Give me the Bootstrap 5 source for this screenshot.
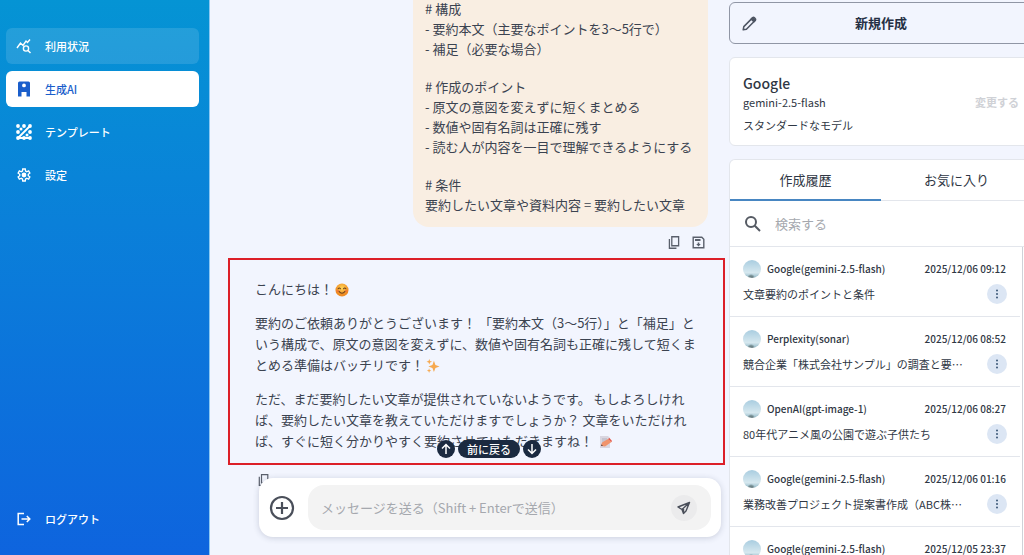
<!DOCTYPE html>
<html lang="ja">
<head>
<meta charset="utf-8">
<meta name="viewport" content="width=device-width, initial-scale=1">
<title>生成AI</title>
<link rel="stylesheet" href="https://cdn.jsdelivr.net/npm/bootstrap@5.3.0/dist/css/bootstrap.min.css">
<style>
  body { font-family: "Noto Sans CJK JP", sans-serif; font-size: 13px; color: #3b4350; background: #f2f5fe; }
  svg { display: block; flex: none; }
  .app-shell { display: grid; grid-template-columns: 210px minmax(0, 1fr) 295px; height: 100vh; }
  .fs-11 { font-size: 11px; line-height: 16px; }
  .fs-10 { font-size: 10px; line-height: 16px; }
  .fs-13 { font-size: 13px; }

  /* sidebar */
  .side-menu { background: linear-gradient(#0594d4, #0a80d9 40%, #0e64de); padding: 28px 10px 18px 6px; border-right: 1px solid #8cc8f2; }
  .side-menu .nav { gap: 7px; }
  .side-menu .nav-link { display: flex; align-items: center; gap: 13px; height: 36px; padding: 0 10px; border-radius: 6px; color: #fff; font-size: 11px; font-weight: 500; }
  .side-menu .nav-link.hovered { background: rgba(255,255,255,.12); }
  .side-menu .nav-link.active { background: #fff; color: #1a5ecb; }

  /* conversation */
  .chat-log { padding: 0 4px 69px 18px; }
  .prompt-bubble { background: #f9eee2; border-radius: 0 0 16px 16px; padding: 32px 12px 12px; width: 295px; margin-right: 17px; line-height: 20px; gap: 18px; }
  .prompt-bubble p { margin: 0; }
  .bubble-tools { gap: 11px; padding: 9px 20px 9px 0; color: #5a606c; }
  .reply-box { border: 2px solid #dc1f28; padding: 18px 18px 12px 25px; line-height: 21px; }
  .reply-box p { margin: 0 0 13px; }
  .reply-box p:last-child { margin: 0; }
  .reply-box svg { display: inline-block; vertical-align: -3px; margin-left: 2px; }
  .reply-tools { padding: 9px 0 0 29px; color: #5a606c; }
  .tool-btn { border: 0; background: none; padding: 0; color: inherit; display: flex; }
  .jump-bar { bottom: 97px; left: 227px; gap: 3px; }
  .jump-bar button { border: 0; background: #1b2a40; color: #fff; height: 18px; min-width: 18px; border-radius: 9px; padding: 0; display: flex; align-items: center; justify-content: center; font-size: 11px; font-weight: 500; }
  .jump-bar .jump-label { padding: 0 9px; }
  .composer { left: 49px; right: 8px; bottom: 18px; height: 59px; background: #fff; border-radius: 14px; box-shadow: 0 1px 6px rgba(40,50,80,.2); padding: 0 10px; gap: 13px; color: #4a4f5a; }
  .composer-field { background: #f3f3f3; border-radius: 16px; height: 45px; padding: 0 14px 0 13px; }
  .composer-field input, .search-row input { border: 0; outline: 0; background: none; min-width: 0; padding: 0; color: inherit; }
  .composer-field input::placeholder, .search-row input::placeholder { color: #a5a8ae; opacity: 1; }
  .send-btn { width: 26px; height: 26px; border: 0; border-radius: 50%; background: #ebebec; color: #4a4f5a; padding: 0; }

  /* right panel, slightly wider than its track */
  .right-rail { margin-right: -9px; padding-top: 2px; gap: 13px; color: #2f3744; }
  .new-btn { border: 1px solid #9096a5; border-radius: 6px; background: transparent; height: 42px; padding: 0 10px; font-weight: 700; color: #253044; }
  .new-btn svg { left: 12px; top: 13px; }
  .panel { background: #fff; border: 1px solid #e3e6ec; border-radius: 6px; }
  .model-panel { padding: 15px 13px 12px; }
  .model-title { font-size: 14px; line-height: 21px; font-weight: 500; }
  .model-note { margin-top: 7px; }
  .change-btn { border: 0; background: none; padding: 0; color: #cfd1d6; font-weight: 700; }
  .history-panel { border-bottom: 0; border-radius: 6px 6px 0 0; }
  .history-tabs button { border: 0; border-bottom: 1px solid #e3e6ec; background: none; height: 41px; padding: 0; color: inherit; }
  .history-tabs button.current { border-bottom: 2px solid #4786c2; }
  .search-row { height: 46px; padding: 0 14px; gap: 13px; border-bottom: 1px solid #e3e6ec; color: #555a63; }
  .history-list { margin-right: 9px; border-right: 1px solid #cfd2d8; padding-right: 2px; }
  .history-item { height: 70px; padding: 13px 13px 0; border-bottom: 1px solid #e3e6ec; }
  .history-item time { margin-right: 1px; }
  .avatar-dot { width: 18px; height: 18px; margin-right: 6px; border-radius: 50%; background: radial-gradient(circle at 45% 100%, #6f8589 0 2px, transparent 4px), linear-gradient(#a9cde0, #d6e8ef 70%, #8eb5c4); }
  .item-row { margin-top: 6px; }
  .more-btn { width: 20px; height: 20px; border: 0; border-radius: 50%; background: #dce6f4; color: #3c5878; padding: 0; display: flex; align-items: center; justify-content: center; }
</style>
</head>
<body class="overflow-hidden">
<svg width="0" height="0" class="position-absolute" aria-hidden="true">
  <symbol id="copy" viewBox="0 0 12 12"><path d="M3.500.7h6.300v8.300H3.500zM1.300 2.800v8.500h6.500" fill="none" stroke="currentColor" stroke-width="1.200"/></symbol>
  <symbol id="dots" viewBox="0 0 10 10"><g fill="currentColor"><circle cx="5" cy="1.500" r="1"/><circle cx="5" cy="5" r="1"/><circle cx="5" cy="8.500" r="1"/></g></symbol>
</svg>
<div class="app-shell overflow-hidden">

  <nav class="side-menu d-flex flex-column justify-content-between">
    <div class="nav flex-column">
      <a class="nav-link hovered" href="#"><svg width="16" height="16" viewBox="0 0 16 16" fill="none" stroke="currentColor" stroke-width="1.400"><path d="M1 10l3.500-5 2.500 2.500L10 3l1.500 1.500L14 1.500"/><circle cx="10" cy="10.500" r="2.600"/><path d="M12 12.500l2.500 2.500"/></svg>利用状況</a>
      <a class="nav-link active" href="#" aria-current="page"><svg width="16" height="16" viewBox="0 0 16 16"><path fill="currentColor" fill-rule="evenodd" d="M3.500.5h9A1.500 1.500 0 0 1 14 2v13.500h-3.500V11h-5v4.500H2V2A1.500 1.500 0 0 1 3.500.5zM8 2.500a1.900 1.900 0 1 0 0 3.800 1.900 1.900 0 1 0 0-3.800z"/></svg>生成AI</a>
      <a class="nav-link" href="#"><svg width="16" height="16" viewBox="0 0 16 16"><g fill="currentColor"><circle cx="2" cy="2" r="1.900"/><circle cx="8" cy="2" r="1.900"/><circle cx="14" cy="2" r="1.900"/><circle cx="2" cy="8" r="1.900"/><circle cx="14" cy="8" r="1.900"/><circle cx="2" cy="14" r="1.900"/><circle cx="8" cy="14" r="1.900"/><circle cx="14" cy="14" r="1.900"/><circle cx="5" cy="5" r="1.500"/><circle cx="11" cy="11" r="1.500"/></g><path d="M2 14L14 2M2 14h12" stroke="currentColor" stroke-width="1.800"/></svg>テンプレート</a>
      <a class="nav-link" href="#"><svg width="16" height="16" viewBox="0 0 24 24" fill="currentColor"><path fill-rule="evenodd" d="M9.200 22l-.4-3.200a7 7 0 0 1-1.200-.7l-3 1.250L1.900 14.600l2.600-1.950v-1.300L1.900 9.400l2.700-4.750 3 1.250c.4-.3.800-.5 1.200-.7L9.200 2h5.600l.4 3.200c.4.2.8.400 1.200.7l3-1.250 2.700 4.750-2.600 1.950v1.300l2.600 1.950-2.700 4.750-3-1.250c-.4.3-.8.500-1.200.7l-.4 3.200zm1.800-2h2l.4-2.700c1-.3 1.900-.8 2.600-1.500l2.500 1 1-1.700-2.200-1.600a6 6 0 0 0 0-3l2.200-1.600-1-1.700-2.500 1a6 6 0 0 0-2.600-1.500L13 4h-2l-.4 2.700A6 6 0 0 0 8 8.200l-2.500-1-1 1.700 2.200 1.600a6 6 0 0 0 0 3l-2.200 1.600 1 1.700 2.500-1a6 6 0 0 0 2.600 1.500z"/><circle cx="12" cy="12" r="3.600"/></svg>設定</a>
    </div>
    <div class="nav flex-column">
      <a class="nav-link" href="#"><svg width="16" height="16" viewBox="0 0 16 16" fill="none" stroke="currentColor" stroke-width="1.500"><path d="M8 2.500H2.200v11H8M5.500 8h8M10.800 5l3 3-3 3"/></svg>ログアウト</a>
    </div>
  </nav>

  <main class="position-relative overflow-hidden">
    <div class="chat-log h-100 d-flex flex-column justify-content-end">
      <div class="prompt-bubble align-self-end d-flex flex-column">
        <p># 構成<br>- 要約本文（主要なポイントを3～5行で）<br>- 補足（必要な場合）</p>
        <p># 作成のポイント<br>- 原文の意図を変えずに短くまとめる<br>- 数値や固有名詞は正確に残す<br>- 読む人が内容を一目で理解できるようにする</p>
        <p># 条件<br>要約したい文章や資料内容 = 要約したい文章</p>
      </div>
      <div class="bubble-tools d-flex justify-content-end">
        <button class="tool-btn" type="button" aria-label="コピー"><svg width="13" height="13"><use href="#copy"/></svg></button>
        <button class="tool-btn" type="button" aria-label="保存"><svg width="13" height="13" viewBox="0 0 13 13"><path d="M1.200 1.200h8.600l2 2v8.600H1.200z" fill="none" stroke="currentColor" stroke-width="1.400"/><path d="M3 3h5.500v2H3zM5.700 6.500h1.600v1.500h1.500L6.500 10.500 4.200 8h1.500z" fill="currentColor"/></svg></button>
      </div>
      <section class="reply-box">
        <p>こんにちは！<svg width="14" height="14" viewBox="0 0 15 15"><defs><radialGradient id="face" cy=".35"><stop stop-color="#ffd75a"/><stop offset="1" stop-color="#f08c22"/></radialGradient></defs><circle cx="7.500" cy="7.500" r="7" fill="url(#face)"/><path d="M3.300 6.200q1.300-1.700 2.600 0M9.100 6.200q1.300-1.700 2.600 0M4.200 9q3.300 3.800 6.600 0" fill="none" stroke="#6b3f1b" stroke-width="1.100" stroke-linecap="round"/><circle cx="2.900" cy="8.600" r="1.300" fill="#f2643c" opacity=".6"/><circle cx="12.100" cy="8.600" r="1.300" fill="#f2643c" opacity=".6"/></svg></p>
        <p>要約のご依頼ありがとうございます！ 「要約本文（3～5行）」と「補足」という構成で、原文の意図を変えずに、数値や固有名詞も正確に残して短くまとめる準備はバッチリです！<svg width="14" height="14" viewBox="0 0 15 15" fill="#f6a950"><path d="M8.500 2l1.600 4.400 4.400 1.600-4.400 1.600-1.600 4.400-1.600-4.400L2.500 8l4.400-1.600z"/><path d="M3.500 0l.8 2.200 2.200.8-2.200.8-.8 2.200-.8-2.200L.5 3l2.200-.8zM3.300 10l.6 1.800 1.800.7-1.800.6-.6 1.800-.6-1.800-1.800-.6 1.800-.7z"/></svg></p>
        <p>ただ、まだ要約したい文章が提供されていないようです。 もしよろしければ、要約したい文章を教えていただけますでしょうか？ 文章をいただければ、すぐに短く分かりやすく要約させていただきますね！ <svg width="14" height="14" viewBox="0 0 14 14"><path d="M2 1h8l2 2v10H2z" fill="#d9d6e0"/><path d="M4 4h5M4 6h4" stroke="#aaa9b8" stroke-width=".8"/><path d="M3 11l1-3.500L10 4l3.500 3L7 11.500z" fill="#f0936b"/><path d="M10 4l1.500-1 2.500 3-.5 1z" fill="#e4574a"/><path d="M3 11l.5-1.800L5 11z" fill="#5c4a48"/></svg></p>
      </section>
      <div class="reply-tools d-flex">
        <button class="tool-btn" type="button" aria-label="コピー"><svg width="14" height="12"><use href="#copy"/></svg></button>
      </div>
    </div>

    <div class="jump-bar position-absolute d-flex">
      <button type="button" aria-label="上へ"><svg width="12" height="12" viewBox="0 0 12 12" fill="none" stroke="currentColor" stroke-width="1.500"><path d="M6 11V1.500M2 5.500l4-4 4 4"/></svg></button>
      <button type="button" class="jump-label">前に戻る</button>
      <button type="button" aria-label="下へ"><svg width="12" height="12" viewBox="0 0 12 12" fill="none" stroke="currentColor" stroke-width="1.500"><path d="M6 1v9.500M2 6.500l4 4 4-4"/></svg></button>
    </div>

    <form class="composer position-absolute d-flex align-items-center">
      <button class="tool-btn" type="button" aria-label="追加"><svg width="26" height="26" viewBox="0 0 26 26" fill="none" stroke="currentColor" stroke-width="2.200"><circle cx="13" cy="13" r="11"/><path d="M13 7v12M7 13h12"/></svg></button>
      <div class="composer-field d-flex align-items-center flex-grow-1">
        <input class="flex-grow-1" type="text" aria-label="メッセージ" placeholder="メッセージを送る（Shift + Enterで送信）">
        <button class="send-btn d-flex align-items-center justify-content-center" type="submit" aria-label="送信"><svg width="14" height="14" viewBox="0 0 14 14" fill="none" stroke="currentColor" stroke-width="1.400" stroke-linejoin="round"><path d="M12.500 1.500L1 6l4 2.500 1.500 4L9 10zM12.500 1.500L5 8.500M6.500 12.500V8"/></svg></button>
      </div>
    </form>
  </main>

  <aside class="right-rail d-flex flex-column overflow-hidden">
    <button class="new-btn position-relative fs-13 flex-shrink-0" type="button"><svg class="position-absolute" width="15" height="15" viewBox="0 0 15 15" fill="none" stroke="#4e5563" stroke-width="1.500" stroke-linejoin="round"><path d="M1.200 13.800l.6-3.200 8.700-8.700q1-1 2 0l.6.600q1 1 0 2l-8.700 8.700z"/><path d="M9.300 3.100l2.600 2.600 1.400-1.400-2.600-2.600z" fill="#4e5563"/></svg>新規作成</button>

    <section class="panel model-panel flex-shrink-0">
      <div class="model-title">Google</div>
      <div class="d-flex justify-content-between fs-11">
        <span>gemini-2.5-flash</span>
        <button class="change-btn" type="button">変更する</button>
      </div>
      <div class="fs-11 model-note">スタンダードなモデル</div>
    </section>

    <section class="panel history-panel flex-grow-1 d-flex flex-column overflow-hidden">
      <div class="history-tabs d-flex flex-shrink-0" role="tablist">
        <button class="w-50 current" type="button" role="tab" aria-selected="true">作成履歴</button>
        <button class="w-50" type="button" role="tab" aria-selected="false">お気に入り</button>
      </div>
      <label class="search-row d-flex align-items-center flex-shrink-0">
        <svg width="18" height="18" viewBox="0 0 18 18" fill="none" stroke="currentColor" stroke-width="2"><circle cx="7" cy="7" r="5"/><path d="M10.800 10.800l5.200 5.200"/></svg>
        <input class="flex-grow-1" type="search" placeholder="検索する" aria-label="検索する">
      </label>
      <div class="history-list">
        <article class="history-item">
          <div class="d-flex align-items-center fw-medium fs-10"><span class="avatar-dot"></span><span class="flex-grow-1">Google(gemini-2.5-flash)</span><time>2025/12/06 09:12</time></div>
          <div class="item-row d-flex align-items-center justify-content-between fs-11"><span>文章要約のポイントと条件</span><button class="more-btn" type="button" aria-label="メニュー"><svg width="10" height="10"><use href="#dots"/></svg></button></div>
        </article>
        <article class="history-item">
          <div class="d-flex align-items-center fw-medium fs-10"><span class="avatar-dot"></span><span class="flex-grow-1">Perplexity(sonar)</span><time>2025/12/06 08:52</time></div>
          <div class="item-row d-flex align-items-center justify-content-between fs-11"><span>競合企業「株式会社サンプル」の調査と要…</span><button class="more-btn" type="button" aria-label="メニュー"><svg width="10" height="10"><use href="#dots"/></svg></button></div>
        </article>
        <article class="history-item">
          <div class="d-flex align-items-center fw-medium fs-10"><span class="avatar-dot"></span><span class="flex-grow-1">OpenAI(gpt-image-1)</span><time>2025/12/06 08:27</time></div>
          <div class="item-row d-flex align-items-center justify-content-between fs-11"><span>80年代アニメ風の公園で遊ぶ子供たち</span><button class="more-btn" type="button" aria-label="メニュー"><svg width="10" height="10"><use href="#dots"/></svg></button></div>
        </article>
        <article class="history-item">
          <div class="d-flex align-items-center fw-medium fs-10"><span class="avatar-dot"></span><span class="flex-grow-1">Google(gemini-2.5-flash)</span><time>2025/12/06 01:16</time></div>
          <div class="item-row d-flex align-items-center justify-content-between fs-11"><span>業務改善プロジェクト提案書作成（ABC株…</span><button class="more-btn" type="button" aria-label="メニュー"><svg width="10" height="10"><use href="#dots"/></svg></button></div>
        </article>
        <article class="history-item">
          <div class="d-flex align-items-center fw-medium fs-10"><span class="avatar-dot"></span><span class="flex-grow-1">Google(gemini-2.5-flash)</span><time>2025/12/05 23:37</time></div>
        </article>
      </div>
    </section>
  </aside>
</div>
<script src="https://cdn.jsdelivr.net/npm/bootstrap@5.3.0/dist/js/bootstrap.bundle.min.js"></script>
</body>
</html>
